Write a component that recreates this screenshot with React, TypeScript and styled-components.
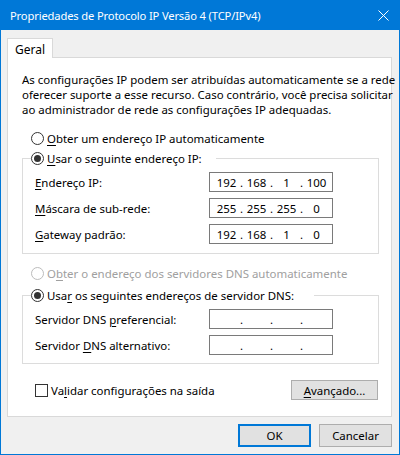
import styled, { createGlobalStyle } from 'styled-components';

const GlobalStyle = createGlobalStyle`
  html, body {
    margin: 0;
    padding: 0;
    background: #f0f0f0;
  }
  body {
    font-family: 'Noto Sans', 'Segoe UI', sans-serif;
    font-size: 11.45px;
    color: #000;
  }
`;

const Window = styled.div`
  width: 400px;
  height: 455px;
  box-sizing: border-box;
  border: 1px solid #0078d7;
  border-top: none;
  display: flex;
  flex-direction: column;
  background: #f0f0f0;
  overflow: hidden;
`;

const TitleBar = styled.div`
  height: 30px;
  flex: none;
  background: #0078d7;
  color: #fff;
  display: flex;
  align-items: center;
  padding-left: 9px;
  font-size: 11.2px;
  letter-spacing: -0.15px;
`;

const Title = styled.div`
  flex: 1;
  white-space: nowrap;
`;

const CloseButton = styled.div`
  width: 31px;
  height: 30px;
  display: flex;
  align-items: center;
  justify-content: center;
`;

const Body = styled.div`
  flex: 1;
  display: flex;
  flex-direction: column;
  padding: 8px 7px 0 6px;
`;

const Tabs = styled.div`
  display: flex;
  height: 19px;
  flex: none;
`;

const Tab = styled.div`
  width: 46px;
  height: 20px;
  box-sizing: border-box;
  background: #fff;
  border: 1px solid #d9d9d9;
  border-bottom: none;
  padding: 2px 0 0 7px;
  position: relative;
  z-index: 1;
  font-size: 12px;
`;

const Panel = styled.div`
  height: 360px;
  flex: none;
  box-sizing: border-box;
  background: #fff;
  border: 1px solid #d9d9d9;
  padding: 14px 12px 0 14px;
  display: flex;
  flex-direction: column;
`;

const Intro = styled.div`
  line-height: 15px;
  white-space: nowrap;
`;

const RadioRow = styled.label<{ $gap: number; $disabled?: boolean }>`
  display: flex;
  align-items: center;
  height: 17px;
  margin-top: ${(p) => p.$gap}px;
  padding-left: 9px;
  white-space: nowrap;
  color: ${(p) => (p.$disabled ? '#a0a0a0' : '#000')};
`;

const RadioCircle = styled.span<{ $checked?: boolean; $disabled?: boolean }>`
  width: 13px;
  height: 13px;
  box-sizing: border-box;
  border-radius: 50%;
  border: 1px solid ${(p) => (p.$disabled ? '#bcbcbc' : '#333')};
  background: #fff;
  margin-right: 3px;
  display: flex;
  align-items: center;
  justify-content: center;
  flex: none;

  &::after {
    content: '';
    display: ${(p) => (p.$checked ? 'block' : 'none')};
    width: 7px;
    height: 7px;
    border-radius: 50%;
    background: #333;
  }
`;

const Key = styled.span`
  text-decoration: underline;
  text-underline-offset: 2px;
`;

const Group = styled.fieldset<{ $gap: number; $bottom: number }>`
  margin: ${(p) => p.$gap}px 0 0 0;
  padding: 0 0 ${(p) => p.$bottom}px 0;
  border: 1px solid #dcdcdc;
  min-width: 0;
`;

const Legend = styled.legend<{ $trail: number }>`
  margin-left: 8px;
  padding: 0 ${(p) => p.$trail}px 0 0;
  height: 17px;
  display: flex;
  align-items: center;
  white-space: nowrap;
`;

const Fields = styled.div`
  display: flex;
  flex-direction: column;
  gap: 6px;
  padding: 5px 0 0 12px;
`;

const FieldRow = styled.div`
  display: flex;
  align-items: center;
  height: 20px;
`;

const FieldLabel = styled.span`
  width: 174px;
  flex: none;
  white-space: nowrap;
`;

const IpBox = styled.div`
  width: 124px;
  height: 20px;
  box-sizing: border-box;
  border: 1px solid #7a7a7a;
  background: #fff;
  display: flex;
  align-items: center;
  padding-left: 4px;
`;

const Octet = styled.span`
  width: 25px;
  text-align: center;
`;

const Dot = styled.span`
  width: 5px;
  text-align: center;
`;

const BottomRow = styled.div`
  display: flex;
  align-items: center;
  justify-content: space-between;
  height: 20px;
  margin-top: 16px;
  padding-left: 13px;
  padding-right: 1px;
`;

const CheckLabel = styled.label`
  display: flex;
  align-items: center;
  white-space: nowrap;
`;

const CheckBox = styled.span`
  width: 13px;
  height: 13px;
  box-sizing: border-box;
  border: 1px solid #333;
  background: #fff;
  margin-right: 3px;
`;

const Button = styled.div<{ $width: number; $height: number; $default?: boolean }>`
  width: ${(p) => p.$width}px;
  height: ${(p) => p.$height}px;
  box-sizing: border-box;
  background: #e1e1e1;
  border: ${(p) => (p.$default ? '2px solid #0078d7' : '1px solid #adadad')};
  display: flex;
  align-items: center;
  justify-content: center;
  white-space: nowrap;
`;

const Footer = styled.div`
  display: flex;
  justify-content: flex-end;
  gap: 8px;
  padding-top: 7px;
`;

function IpField({ value }: { value?: string[] }) {
  const parts = value ?? ['', '', '', ''];
  return (
    <IpBox>
      {parts.map((part, i) => (
        <span key={i} style={{ display: 'contents' }}>
          <Octet>{part}</Octet>
          {i < 3 && <Dot>.</Dot>}
        </span>
      ))}
    </IpBox>
  );
}

export default function App() {
  return (
    <>
      <GlobalStyle />
      <Window>
        <TitleBar>
          <Title>Propriedades de Protocolo IP Versão 4 (TCP/IPv4)</Title>
          <CloseButton>
            <svg width="11" height="11" viewBox="0 0 11 11">
              <path d="M0.5 0.5 L10.5 10.5 M10.5 0.5 L0.5 10.5" stroke="#fff" strokeWidth="1" />
            </svg>
          </CloseButton>
        </TitleBar>
        <Body>
          <Tabs>
            <Tab>Geral</Tab>
          </Tabs>
          <Panel>
            <Intro>
              <div>As configurações IP podem ser atribuídas automaticamente se a rede</div>
              <div>oferecer suporte a esse recurso. Caso contrário, você precisa solicitar</div>
              <div>ao administrador de rede as configurações IP adequadas.</div>
            </Intro>

            <RadioRow $gap={13}>
              <RadioCircle />
              <span>
                <Key>O</Key>bter um endereço IP automaticamente
              </span>
            </RadioRow>

            <Group $gap={3} $bottom={9}>
              <Legend $trail={14}>
                <RadioCircle $checked />
                <span>
                  <Key>U</Key>sar o seguinte endereço IP:
                </span>
              </Legend>
              <Fields>
                <FieldRow>
                  <FieldLabel>
                    <Key>E</Key>ndereço IP:
                  </FieldLabel>
                  <IpField value={['192', '168', '1', '100']} />
                </FieldRow>
                <FieldRow>
                  <FieldLabel>
                    <Key>M</Key>áscara de sub-rede:
                  </FieldLabel>
                  <IpField value={['255', '255', '255', '0']} />
                </FieldRow>
                <FieldRow>
                  <FieldLabel>
                    <Key>G</Key>ateway padrão:
                  </FieldLabel>
                  <IpField value={['192', '168', '1', '0']} />
                </FieldRow>
              </Fields>
            </Group>

            <RadioRow $gap={11} $disabled>
              <RadioCircle $disabled />
              <span>
                O<Key>b</Key>ter o endereço dos servidores DNS automaticamente
              </span>
            </RadioRow>

            <Group $gap={5} $bottom={8}>
              <Legend $trail={20}>
                <RadioCircle $checked />
                <span>
                  Usa<Key>r</Key> os seguintes endereços de servidor DNS:
                </span>
              </Legend>
              <Fields>
                <FieldRow>
                  <FieldLabel>
                    Servidor DNS <Key>p</Key>referencial:
                  </FieldLabel>
                  <IpField />
                </FieldRow>
                <FieldRow>
                  <FieldLabel>
                    Servidor <Key>D</Key>NS alternativo:
                  </FieldLabel>
                  <IpField />
                </FieldRow>
              </Fields>
            </Group>

            <BottomRow>
              <CheckLabel>
                <CheckBox />
                <span>
                  Va<Key>l</Key>idar configurações na saída
                </span>
              </CheckLabel>
              <Button $width={87} $height={20}>
                <span>
                  <Key>A</Key>vançado...
                </span>
              </Button>
            </BottomRow>
          </Panel>
          <Footer>
            <Button $width={73} $height={23} $default>
              OK
            </Button>
            <Button $width={73} $height={23}>
              Cancelar
            </Button>
          </Footer>
        </Body>
      </Window>
    </>
  );
}
